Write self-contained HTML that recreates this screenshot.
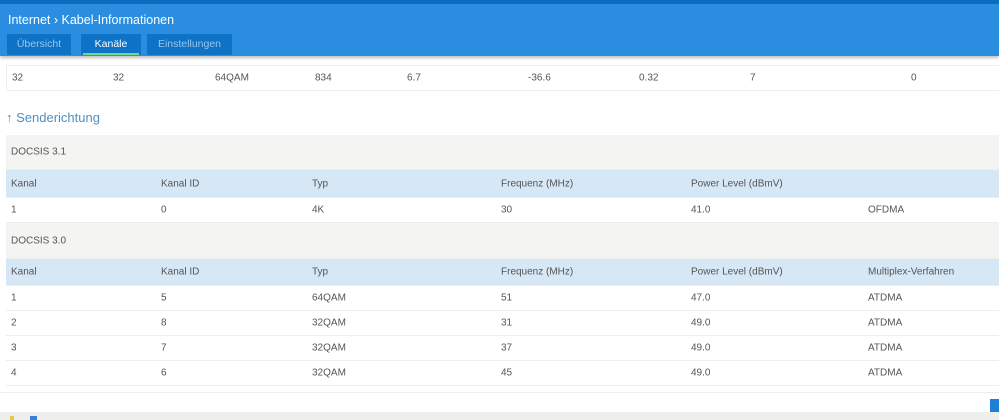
<!DOCTYPE html>
<html><head><meta charset="utf-8"><style>
*{margin:0;padding:0;box-sizing:border-box}
body{width:999px;height:420px;overflow:hidden;background:#fff;font-family:"Liberation Sans",sans-serif;font-size:10px;color:#555;position:relative}
.a{position:absolute;white-space:nowrap}
.hdr{position:absolute;left:0;top:0;width:999px;height:56px;background:#2a8de0;box-shadow:0 2px 3px rgba(0,0,0,.25);z-index:5}
.top{position:absolute;left:0;top:0;width:999px;height:4px;background:#0b6cc0}
.tab{position:absolute;top:34px;height:21px;background:#0e72c6;color:#9cc6ec;font-size:10.5px;text-align:center;line-height:21px}
.row{position:absolute;left:6px;width:993px;border-bottom:1px solid #eceeee}
.gray{background:#f4f4f3}
.blue{background:#d6e7f6}
.row span{position:absolute;top:50%;transform:translateY(-50%)}
</style></head><body>
<div class="hdr"><div class="top"></div>
<div class="a" style="left:8px;top:13px;color:#fff;font-size:12.5px">Internet &#x203A; Kabel-Informationen</div>
<div class="tab" style="left:7px;width:64px">Übersicht</div>
<div class="tab" style="left:81px;width:60px;color:#fff">Kanäle<div style="position:absolute;left:2px;right:2px;bottom:0;height:2px;background:#6fd88a"></div></div>
<div class="tab" style="left:147px;width:85px">Einstellungen</div>
</div>
<div class="row" style="top:56px;height:10px"></div>
<div class="row" style="top:66px;height:25px;border-left:1px solid #eee">
<span style="left:5px">32</span><span style="left:106px">32</span><span style="left:208px">64QAM</span><span style="left:308px">834</span><span style="left:400px">6.7</span><span style="left:521px">-36.6</span><span style="left:632px">0.32</span><span style="left:743px">7</span><span style="left:904px">0</span></div>
<div class="a" style="left:6px;top:110px;color:#4f8fbf;font-size:13px">&#x2191; Senderichtung</div>
<div class="row gray" style="top:135px;height:35px"><span style="left:5px">DOCSIS 3.1</span></div>
<div class="row blue" style="top:170px;height:28px"><span style="left:5px">Kanal</span><span style="left:155px">Kanal ID</span><span style="left:306px">Typ</span><span style="left:495px">Frequenz (MHz)</span><span style="left:685px">Power Level (dBmV)</span></div>
<div class="row" style="top:198px;height:25px"><span style="left:5px">1</span><span style="left:155px">0</span><span style="left:306px">4K</span><span style="left:495px">30</span><span style="left:685px">41.0</span><span style="left:862px">OFDMA</span></div>
<div class="row gray" style="top:223px;height:36px"><span style="left:5px">DOCSIS 3.0</span></div>
<div class="row blue" style="top:259px;height:27px"><span style="left:5px">Kanal</span><span style="left:155px">Kanal ID</span><span style="left:306px">Typ</span><span style="left:495px">Frequenz (MHz)</span><span style="left:685px">Power Level (dBmV)</span><span style="left:862px">Multiplex-Verfahren</span></div>
<div class="row" style="top:286px;height:25px"><span style="left:5px">1</span><span style="left:155px">5</span><span style="left:306px">64QAM</span><span style="left:495px">51</span><span style="left:685px">47.0</span><span style="left:862px">ATDMA</span></div>
<div class="row" style="top:311px;height:25px"><span style="left:5px">2</span><span style="left:155px">8</span><span style="left:306px">32QAM</span><span style="left:495px">31</span><span style="left:685px">49.0</span><span style="left:862px">ATDMA</span></div>
<div class="row" style="top:336px;height:25px"><span style="left:5px">3</span><span style="left:155px">7</span><span style="left:306px">32QAM</span><span style="left:495px">37</span><span style="left:685px">49.0</span><span style="left:862px">ATDMA</span></div>
<div class="row" style="top:361px;height:25px"><span style="left:5px">4</span><span style="left:155px">6</span><span style="left:306px">32QAM</span><span style="left:495px">45</span><span style="left:685px">49.0</span><span style="left:862px">ATDMA</span></div>
<div class="a" style="left:0;top:392px;width:999px;height:1px;background:#eee"></div>
<div class="a" style="left:990px;top:399px;width:9px;height:13px;background:#1e7fd6"></div>
<div class="a" style="left:0;top:412px;width:999px;height:8px;background:#eeeeec"></div>
<div class="a" style="left:10px;top:416px;width:4px;height:4px;background:#e8c84a"></div>
<div class="a" style="left:30px;top:416px;width:7px;height:4px;background:#3b7fd0"></div>
</body></html>
